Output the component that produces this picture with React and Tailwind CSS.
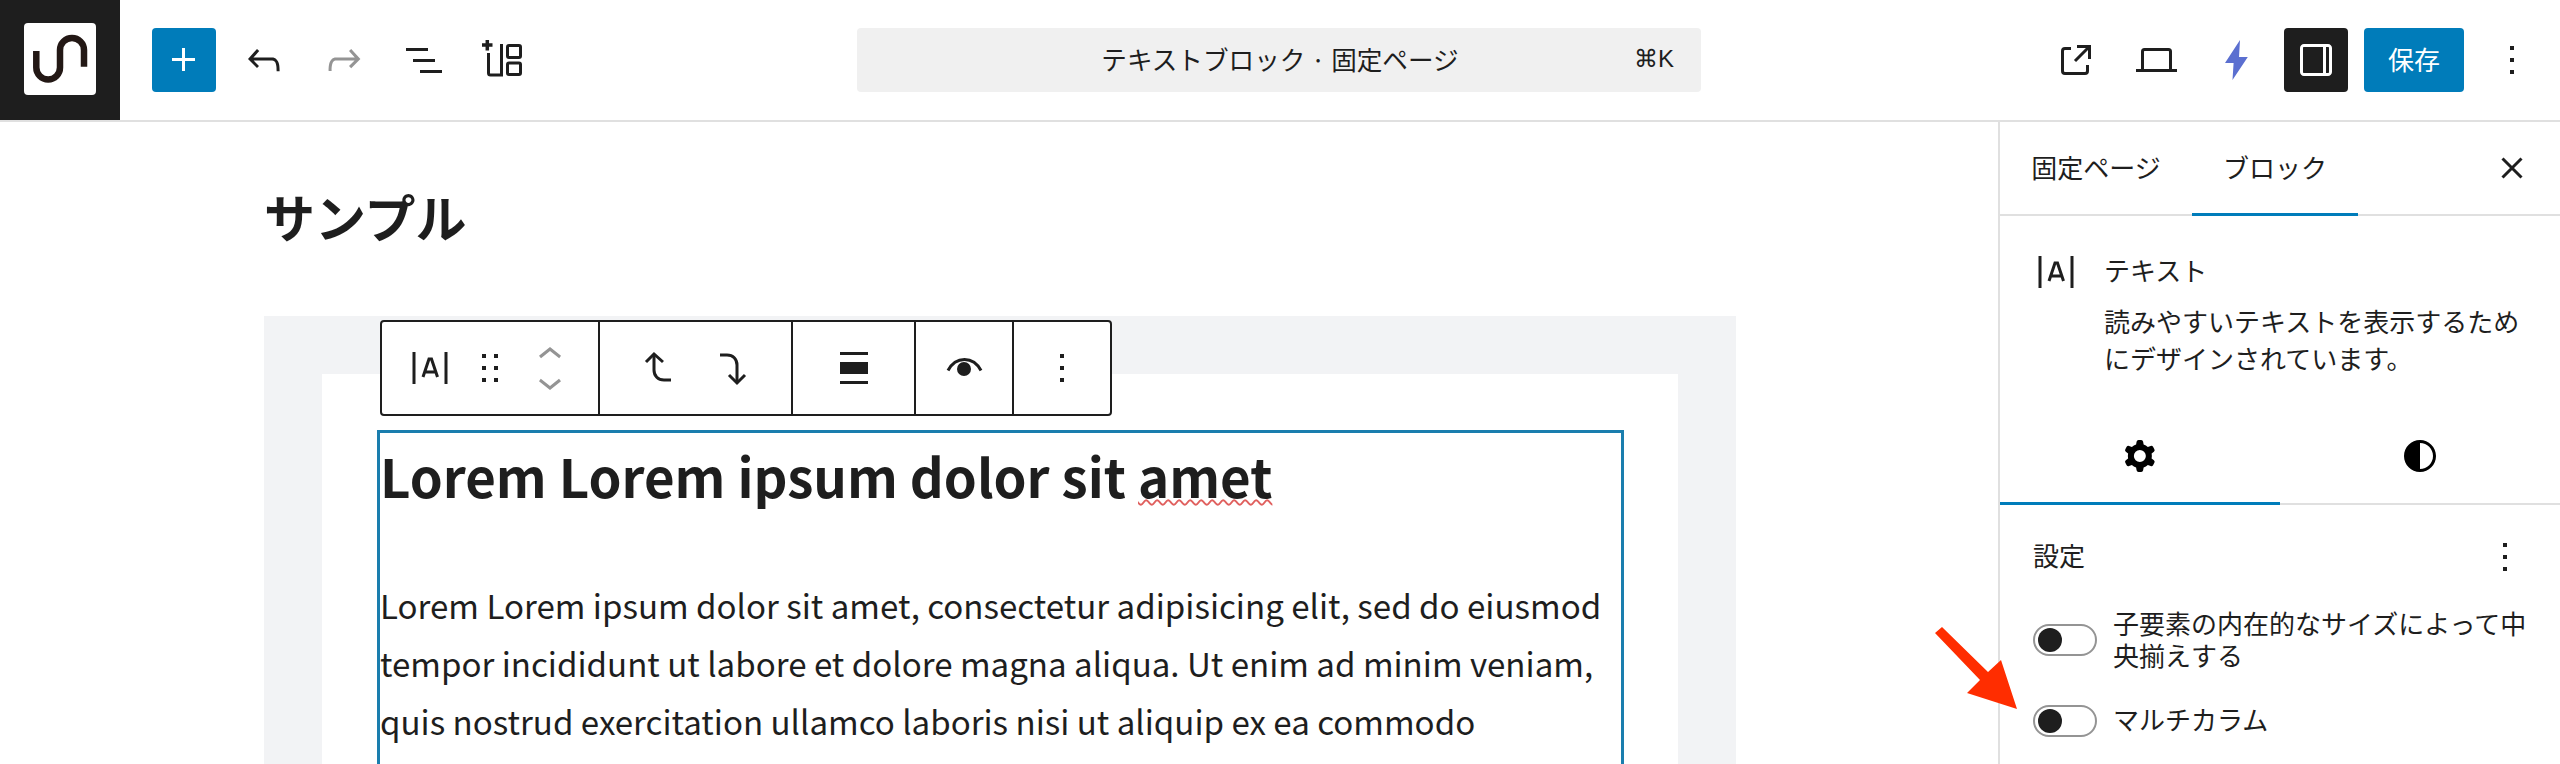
import React from "react";

const I = ({ d, size = 48, cls = "fill-[#1e1e1e]", rule }) => (
  <svg width={size} height={size} viewBox="0 0 24 24" className={cls}>
    <path d={d} fillRule={rule} clipRule={rule} />
  </svg>
);

const P = {
  plus: "M11 12.5V17.5H12.5V12.5H17.5V11H12.5V6H11V11H6V12.5H11Z",
  undo: "M18.3 11.7c-.6-.6-1.4-.9-2.3-.9H6.7l2.9-3.3-1.1-1-4.5 5L8.5 16l1-1-2.7-2.7H16c.5 0 .9.2 1.3.5 1 1 1 3.4 1 4.5v.3h1.5v-.2c0-1.5 0-4.3-1.5-5.7z",
  redo: "M15.6 6.5l-1.1 1 2.9 3.3H8c-.9 0-1.7.3-2.3.9-1.4 1.5-1.4 4.2-1.4 5.6v.2h1.5v-.3c0-1.1 0-3.5 1-4.5.3-.3.7-.5 1.3-.5h9.2L14.5 15l1.1 1.1 4.6-4.6-4.6-5z",
  list: "M3 6h11v1.5H3V6Zm3.5 5.5h11V13h-11v-1.5ZM21 17H10v1.5h11V17Z",
  external: "M19.5 4.5h-7V6h4.44l-5.97 5.97 1.06 1.06L18 7.06v4.44h1.5v-7Zm-13 1a2 2 0 0 0-2 2v10a2 2 0 0 0 2 2h10a2 2 0 0 0 2-2v-3H17v3a.5.5 0 0 1-.5.5h-10a.5.5 0 0 1-.5-.5v-10a.5.5 0 0 1 .5-.5h3V5.5h-3Z",
  sidebar: "M18 4H6c-1.1 0-2 .9-2 2v12c0 1.1.9 2 2 2h12c1.1 0 2-.9 2-2V6c0-1.1-.9-2-2-2zm-2.500 14.500H6c-.3 0-.5-.2-.5-.5V6c0-.3.2-.5.5-.5h9.500v13zm3-.5c0 .3-.2.5-.5.5h-1v-13h1c.3 0 .5.2.5.5v12z",
  more: "M13 19h-2v-2h2v2zm0-6h-2v-2h2v2zm0-6h-2V5h2v2z",
  drag: "M8 7h2V5H8v2zm0 6h2v-2H8v2zm0 6h2v-2H8v2zm6-14v2h2V5h-2zm0 8h2v-2h-2v2zm0 6h2v-2h-2v2z",
  up: "M6.5 12.4L12 8l5.5 4.4-.9 1.2L12 10l-4.5 3.6-1-1.2z",
  down: "M17.5 11.6L12 16l-5.5-4.4.9-1.2L12 14l4.5-3.6 1 1.2z",
  gear: "M10.289 4.836A1 1 0 0 1 11.275 4h1.306a1 1 0 0 1 .986.836l.244 1.466c.788.26 1.503.679 2.108 1.218l1.393-.522a1 1 0 0 1 1.216.437l.653 1.13a1 1 0 0 1-.23 1.273l-1.148.944a6.025 6.025 0 0 1 0 2.435l1.149.946a1 1 0 0 1 .23 1.272l-.653 1.13a1 1 0 0 1-1.216.437l-1.394-.522c-.605.54-1.32.958-2.108 1.218l-.244 1.466a1 1 0 0 1-.986.836h-1.306a1 1 0 0 1-.986-.836l-.244-1.466a5.995 5.995 0 0 1-2.108-1.218l-1.394.522a1 1 0 0 1-1.217-.436l-.653-1.131a1 1 0 0 1 .23-1.272l1.149-.946a6.026 6.026 0 0 1 0-2.435l-1.148-.944a1 1 0 0 1-.23-1.272l.653-1.131a1 1 0 0 1 1.217-.437l1.393.522a5.994 5.994 0 0 1 2.108-1.218l.244-1.466ZM14.929 12a3 3 0 1 1-6 0 3 3 0 0 1 6 0Z",
  contrast: "M12 4c-4.4 0-8 3.6-8 8s3.6 8 8 8 8-3.6 8-8-3.6-8-8-8zm0 14.500v-13c3.6 0 6.500 2.900 6.500 6.500s-2.900 6.500-6.500 6.500z",
};

const Para = () => (
  <svg width="48" height="48" viewBox="0 0 48 48" fill="none" stroke="#1e1e1e">
    <path d="M8 8v32M40 8v32" strokeWidth="3" />
    <path d="M17 33l6-18h2.500l6 18M19 28h10" strokeWidth="3" />
  </svg>
);

const Logo = () => (
  <svg width="72" height="72" viewBox="0 0 72 72" fill="none">
    <path d="M12.300 28v16.500a11.850 12 0 0 0 23.700 0V27a12 12 0 0 1 24 0v16.700" stroke="#231815" strokeWidth="6.500" />
  </svg>
);

const Patterns = () => (
  <svg width="48" height="48" viewBox="0 0 48 48" fill="none" stroke="#1e1e1e" strokeWidth="3">
    <path d="M2 9h10.500M7.300 4v10.500" strokeWidth="3.500" />
    <path d="M8.500 17v20a2 2 0 0 0 2 2H21.500V8" />
    <rect x="27.500" y="9.500" width="13" height="12" rx="1.500" />
    <rect x="27.500" y="27" width="13" height="11.500" rx="1.500" />
  </svg>
);

const Laptop = () => (
  <svg width="48" height="48" viewBox="0 0 48 48" fill="none" stroke="#1e1e1e" strokeWidth="3">
    <path d="M10.500 34V15.500a2 2 0 0 1 2-2h24a2 2 0 0 1 2 2V34" />
    <path d="M4 34.500h41" />
  </svg>
);

const Close = () => (
  <svg width="32" height="32" viewBox="0 0 32 32" fill="none" stroke="#1e1e1e" strokeWidth="3">
    <path d="M6.500 6.500l19 19M25.500 6.500l-19 19" />
  </svg>
);

const Bolt = () => (
  <svg width="24" height="40" viewBox="0 0 24 40" className="fill-[#5b6fd0]">
    <path d="M16 0L1 23h8.600L8.500 40 23.800 17H15z" />
  </svg>
);

const TransformUp = () => (
  <svg width="48" height="48" viewBox="0 0 48 48" fill="none" stroke="#1e1e1e" strokeWidth="3">
    <path d="M11 18l8-8 9 8" />
    <path d="M19 10v16c0 6 4 10 10 10h7" />
  </svg>
);

const TransformDown = () => (
  <svg width="48" height="48" viewBox="0 0 48 48" fill="none" stroke="#1e1e1e" strokeWidth="3">
    <path d="M11 11h7c6 0 10 4 10 10v18" />
    <path d="M20 31l8 8 8-8" />
  </svg>
);

const AlignFull = () => (
  <svg width="48" height="48" viewBox="0 0 48 48" className="fill-[#1e1e1e]">
    <path d="M10 8h28v3H10zM10 18h28v12H10zM10 37h28v3H10z" />
  </svg>
);

const Eye = () => (
  <svg width="48" height="48" viewBox="0 0 48 48" className="fill-[#1e1e1e]">
    <path d="M8 26.500C12 19 18 15.500 24.500 15.500S37 19 41 26.500" fill="none" stroke="#1e1e1e" strokeWidth="3" />
    <circle cx="24" cy="25" r="7" />
  </svg>
);

const Arrow = () => (
  <svg width="100" height="100" viewBox="0 0 100 100" className="absolute left-[1925px] top-[620px] fill-[#ff2d00]">
    <path d="M10 13L17 7 63 52 76 40 92 89 42 73 55 60z" />
  </svg>
);

const Btn = ({ w = "w-[80px]", children }) => (
  <div className={`${w} h-[64px] flex items-center justify-center shrink-0`}>{children}</div>
);

const Group = ({ w, children, last }) => (
  <div className={`${w} h-full flex items-center justify-center shrink-0 ${last ? "" : "border-r-2 border-[#1e1e1e]"}`}>{children}</div>
);

const Toggle = () => (
  <div className="w-[64px] h-[32px] shrink-0 rounded-full border-2 border-[#949494] bg-white flex items-center pl-[3px]">
    <div className="w-[24px] h-[24px] rounded-full bg-[#1e1e1e]" />
  </div>
);

export default function App() {
  return (
    <div className="w-[2560px] h-[764px] overflow-hidden bg-white relative flex flex-col text-[#1e1e1e] font-['Noto_Sans_CJK_JP',sans-serif]">
      <header className="h-[122px] shrink-0 flex border-b-2 border-[#e0e0e0] bg-white">
        <div className="w-[857px] flex items-center shrink-0">
          <div className="w-[120px] h-[120px] bg-[#1e1e1e] flex items-center justify-center shrink-0">
            <div className="w-[72px] h-[72px] bg-white rounded-[4px] mt-[-2px]"><Logo /></div>
          </div>
          <div className="w-[64px] h-[64px] ml-[32px] mr-[8px] bg-[#007cba] rounded-[4px] flex items-center justify-center shrink-0">
            <I d={P.plus} cls="fill-white" />
          </div>
          <Btn><I d={P.undo} /></Btn>
          <Btn><I d={P.redo} cls="fill-[#949494]" /></Btn>
          <Btn><I d={P.list} /></Btn>
          <Btn><Patterns /></Btn>
        </div>
        <div className="w-[844px] shrink-0 flex items-center">
          <div className="w-full h-[64px] bg-[#f0f0f0] rounded-[4px] flex items-center relative justify-center text-[25.6px] pb-[2px] pl-[2px]">
            <span>テキストブロック · 固定ページ</span>
            <span className="absolute right-[27px] text-[24px] font-['Liberation_Sans',sans-serif]">⌘K</span>
          </div>
        </div>
        <div className="flex-1 flex items-center justify-end pr-[16px]">
          <Btn><I d={P.external} /></Btn>
          <Btn><Laptop /></Btn>
          <Btn><Bolt /></Btn>
          <div className="w-[64px] h-[64px] ml-[8px] bg-[#1e1e1e] rounded-[4px] flex items-center justify-center shrink-0">
            <I d={P.sidebar} cls="fill-white" />
          </div>
          <div className="w-[100px] h-[64px] ml-[16px] bg-[#007cba] rounded-[4px] text-white text-[26px] pb-[3px] flex items-center justify-center shrink-0">保存</div>
          <Btn w="w-[64px] ml-[16px]"><I d={P.more} /></Btn>
        </div>
      </header>

      <main className="flex flex-1 min-h-0">
        <section className="flex-1 min-w-0 pl-[264px] overflow-hidden relative">
          <h1 className="mt-[58px] mb-[64px] text-[51px] leading-[72px] font-bold">サンプル</h1>
          <div className="w-[1472px] h-[600px] bg-[#f2f3f5] pl-[58px] pt-[58px]">
            <div className="w-[1356px] h-[600px] bg-white pl-[55px] pt-[56px]">
              <div className="w-[1247px] h-[600px] border-[3px] border-b-0 border-[#1a7eae] pt-[2px]">
                <h2 className="text-[52.8px] leading-[80px] font-bold mb-[61px]">
                  Lorem Lorem ipsum dolor sit <span className="underline decoration-wavy decoration-[#e0605e] decoration-2 underline-offset-[1px]">amet</span>
                </h2>
                <p className="text-[33.1px] leading-[58px] w-[1238px]">
                  Lorem Lorem ipsum dolor sit amet, consectetur adipisicing elit, sed do eiusmod tempor incididunt ut labore et dolore magna aliqua. Ut enim ad minim veniam, quis nostrud exercitation ullamco laboris nisi ut aliquip ex ea commodo
                </p>
              </div>
            </div>
          </div>
          <div className="absolute left-[380px] top-[198px] w-[732px] h-[96px] bg-white border-2 border-[#1e1e1e] rounded-[4px] flex">
            <Group w="w-[218px]">
              <div className="flex items-center gap-[12px]">
                <Para />
                <I d={P.drag} />
                <div className="flex flex-col items-center w-[48px]">
                  <div className="h-[27px] flex items-center"><I d={P.up} cls="fill-[#949494]" /></div>
                  <div className="h-[27px] flex items-center"><I d={P.down} cls="fill-[#949494]" /></div>
                </div>
              </div>
            </Group>
            <Group w="w-[193px]"><div className="flex gap-[26px]"><TransformUp /><TransformDown /></div></Group>
            <Group w="w-[123px]"><AlignFull /></Group>
            <Group w="w-[98px]"><Eye /></Group>
            <Group w="flex-1" last><I d={P.more} /></Group>
          </div>
        </section>

        <aside className="w-[562px] shrink-0 border-l-2 border-[#e0e0e0] bg-white text-[26px]">
          <div className="h-[94px] border-b-2 border-[#e0e0e0] flex relative">
            <div className="w-[192px] flex items-center justify-center pb-[4px]">固定ページ</div>
            <div className="w-[166px] flex items-center justify-center border-b-[3px] border-[#007cba] -mb-[2px] pb-[2px]">ブロック</div>
            <div className="absolute right-[32px] top-[30px]"><Close /></div>
          </div>
          <div className="h-[193px] flex pl-[32px] pt-[36px] gap-[24px]">
            <div className="shrink-0 -mt-[4px]"><Para /></div>
            <div className="w-[424px]">
              <div className="leading-[36px] mb-[14px]">テキスト</div>
              <div className="leading-[37px]">読みやすいテキストを表示するためにデザインされています。</div>
            </div>
          </div>
          <div className="h-[96px] border-b-2 border-[#e0e0e0] flex">
            <div className="w-[280px] flex items-center justify-center border-b-[3px] border-[#007cba] -mb-[2px]">
              <I d={P.gear} cls="fill-black" rule="evenodd" />
            </div>
            <div className="w-[280px] flex items-center justify-center"><I d={P.contrast} cls="fill-black" /></div>
          </div>
          <div className="pl-[33px] pr-[32px]">
            <div className="h-[68px] mt-[18px] flex items-center justify-between leading-[36px]">
              <span className="-mt-[5px]">設定</span>
              <span className="mr-[-1px]"><I d={P.more} /></span>
            </div>
            <div className="mt-[18px] flex items-center gap-[16px] leading-[32px]">
              <Toggle />
              <div className="w-[430px] -mt-[2px]">子要素の内在的なサイズによって中央揃えする</div>
            </div>
            <div className="mt-[33px] flex items-center gap-[16px] leading-[36px]">
              <Toggle />
              <div className="-mt-[3px]">マルチカラム</div>
            </div>
          </div>
        </aside>
      </main>
      <Arrow />
    </div>
  );
}
